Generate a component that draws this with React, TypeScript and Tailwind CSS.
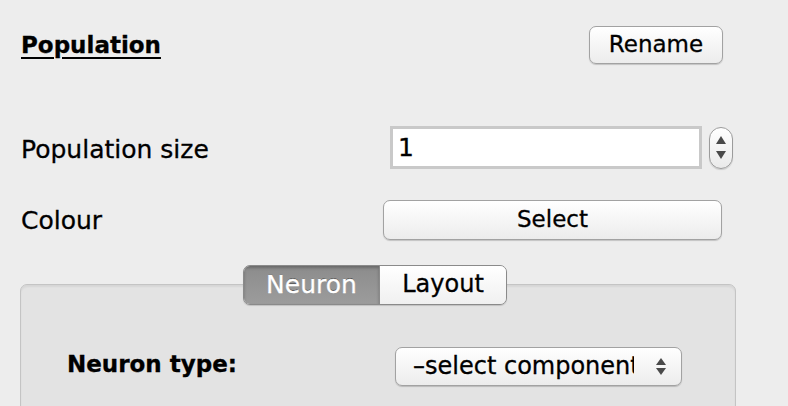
import React from "react";

const font = { fontFamily: '"DejaVu Sans", "Liberation Sans", sans-serif' };

function MacButton({ children, className }: { children: React.ReactNode; className: string }) {
  return (
    <div
      className={
        "flex items-center justify-center rounded-[7px] border border-[#a2a2a2] bg-gradient-to-b from-[#ffffff] to-[#ececec] text-[23px] leading-none text-black shadow-[0_1px_1px_rgba(0,0,0,0.18)] " +
        className
      }
    >
      {children}
    </div>
  );
}

export default function App() {
  return (
    <div
      className="h-[406px] w-[788px] overflow-hidden bg-[#ededed] pl-[20px] text-black [-webkit-text-stroke:0.3px_currentColor]"
      style={font}
    >
      <div className="flex w-[716px] flex-col">
        {/* Heading row */}
        <div className="mt-[26px] flex items-center pr-[13px]">
          <div className="ml-[1px] text-[23px] font-bold leading-none underline decoration-[2px] underline-offset-[4px]">
            Population
          </div>
          <MacButton className="ml-auto h-[38px] w-[134px] pb-[2px]">Rename</MacButton>
        </div>

        {/* Population size */}
        <div className="mt-[62px] flex items-center">
          <div className="ml-[1px] pt-[4px] text-[25px] leading-none">Population size</div>
          <div className="ml-auto flex items-center pr-[3px]">
            <div className="flex h-[43px] w-[312px] items-center border-[3px] border-[#c9c9c9] bg-white pl-[5px] text-[25px] leading-none">
              1
            </div>
            <div className="ml-[7px] flex h-[42px] w-[24px] flex-col items-center justify-center gap-[7px] rounded-[12px] border border-[#9c9c9c] bg-gradient-to-b from-[#ffffff] to-[#eaeaea] shadow-[0_1px_1px_rgba(0,0,0,0.15)]">
              <svg width="10" height="8" viewBox="0 0 10 8">
                <path d="M5 0 L10 8 L0 8 Z" fill="#4a4a4a" />
              </svg>
              <svg width="10" height="8" viewBox="0 0 10 8">
                <path d="M0 0 L10 0 L5 8 Z" fill="#4a4a4a" />
              </svg>
            </div>
          </div>
        </div>

        {/* Colour */}
        <div className="mt-[31px] flex items-center pr-[14px]">
          <div className="ml-[1px] text-[25px] leading-none">Colour</div>
          <MacButton className="ml-auto h-[40px] w-[339px] pb-[2px]">Select</MacButton>
        </div>

        {/* Tabs */}
        <div className="relative z-10 mt-[25px] flex pl-[223px]">
          <div className="flex h-[40px] overflow-hidden rounded-[7px] border border-[#8a8a8a] shadow-[0_1px_1px_rgba(0,0,0,0.15)]">
            <div className="flex w-[135px] items-center justify-center bg-gradient-to-b from-[#8c8c8c] to-[#9c9c9c] pb-[2px] text-[25px] leading-none text-white [text-shadow:0_-1px_0_rgba(0,0,0,0.45)] shadow-[inset_0_2px_3px_rgba(0,0,0,0.25)]">
              Neuron
            </div>
            <div className="flex w-[127px] items-center justify-center border-l border-[#8a8a8a] bg-gradient-to-b from-[#ffffff] to-[#f0f0f0] pb-[2px] text-[24px] leading-none">
              Layout
            </div>
          </div>
        </div>

        {/* Group box */}
        <div className="-mt-[21px] h-[200px] rounded-t-[7px] border border-[#c4c4c4] bg-[#e3e3e3] shadow-[inset_0_2px_2px_rgba(0,0,0,0.06)]">
          <div className="mt-[62px] flex items-center pl-[46px]">
            <div className="pb-[4px] text-[23px] font-bold leading-none">Neuron type:</div>
            <div className="ml-auto mr-[53px] flex h-[39px] w-[287px] items-center rounded-[7px] border border-[#a2a2a2] bg-gradient-to-b from-[#ffffff] to-[#ececec] shadow-[0_1px_1px_rgba(0,0,0,0.18)]">
              <div className="w-[238px] overflow-hidden whitespace-nowrap pb-[2px] pl-[17px] text-[24px] leading-none">
                –select component
              </div>
              <div className="ml-auto mr-[15px] flex flex-col gap-[3px]">
                <svg width="10" height="7" viewBox="0 0 10 7">
                  <path d="M5 0 L10 7 L0 7 Z" fill="#4a4a4a" />
                </svg>
                <svg width="10" height="7" viewBox="0 0 10 7">
                  <path d="M0 0 L10 0 L5 7 Z" fill="#4a4a4a" />
                </svg>
              </div>
            </div>
          </div>
        </div>
      </div>
    </div>
  );
}
